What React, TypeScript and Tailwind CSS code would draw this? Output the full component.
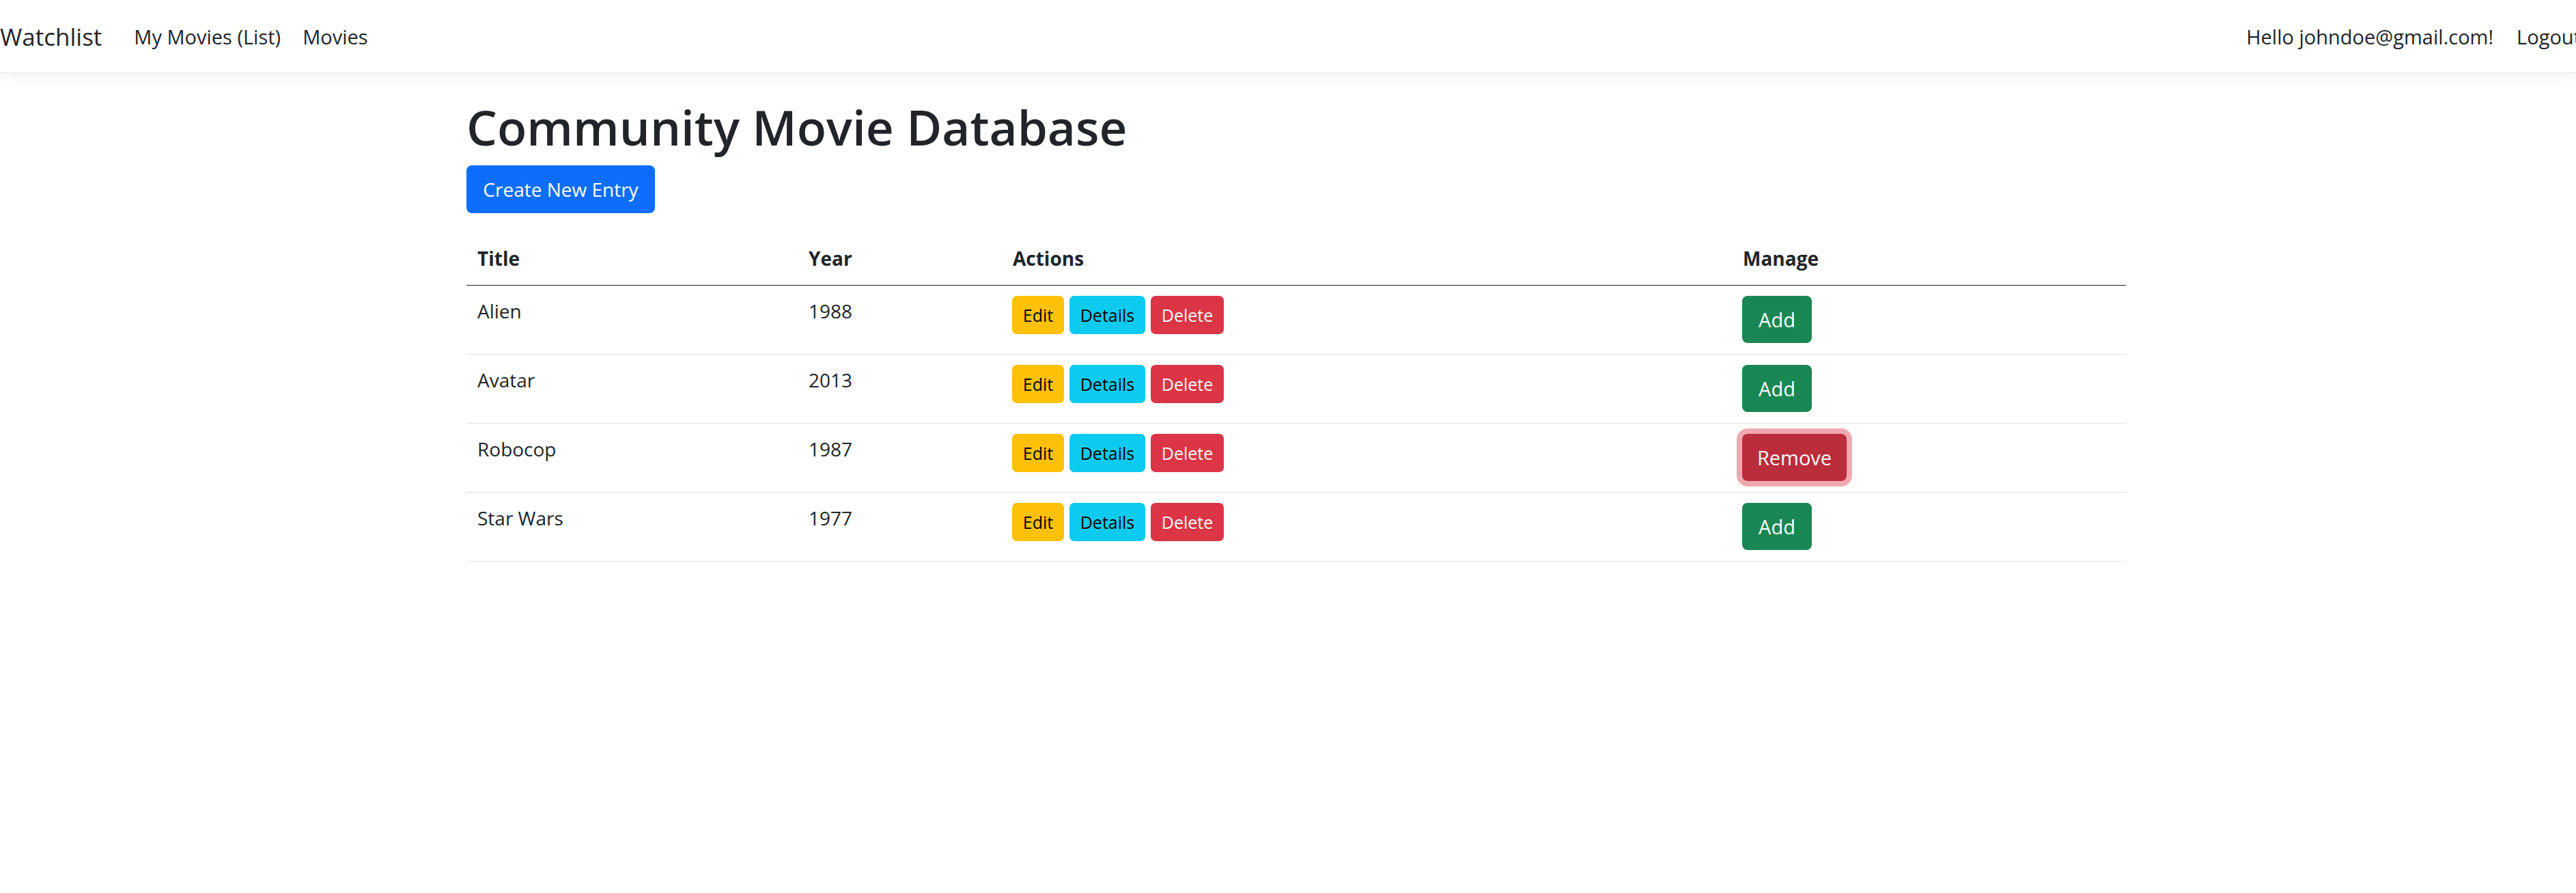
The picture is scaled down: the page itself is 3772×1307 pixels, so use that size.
import React from "react";

type Movie = { title: string; year: number; inList: boolean };

const movies: Movie[] = [
  { title: "Alien", year: 1988, inList: false },
  { title: "Avatar", year: 2013, inList: false },
  { title: "Robocop", year: 1987, inList: true },
  { title: "Star Wars", year: 1977, inList: false },
];

const font = { fontFamily: '"Open Sans", "Noto Sans", sans-serif' };

function Navbar() {
  return (
    <nav className="flex h-[107px] items-center overflow-hidden border-b border-[#e5e5e5] bg-white shadow-[0_7px_22px_rgba(0,0,0,0.05)]">
      <span className="text-[35px] leading-none text-[#212529]">Watchlist</span>
      <div className="ml-[47px] flex items-center gap-[32px] text-[29px] leading-none text-[#212529]">
        <a>My Movies (List)</a>
        <a>Movies</a>
      </div>
      <div className="ml-auto mr-[-7px] flex items-center gap-[34px] text-[29px] leading-none text-[#212529]">
        <span>Hello johndoe@gmail.com!</span>
        <a>Logout</a>
      </div>
    </nav>
  );
}

function SmallBtn({ label, className }: { label: string; className: string }) {
  return (
    <button
      type="button"
      className={`flex h-[56px] items-center justify-center rounded-[7px] text-[25px] leading-none ${className}`}
    >
      {label}
    </button>
  );
}

function Row({ movie }: { movie: Movie }) {
  return (
    <div className="flex border-b border-[#dee2e6] pt-[15px] pb-[16px] text-[28px] leading-[45px] text-[#212529]">
      <div className="w-[485px] px-[16px]">{movie.title}</div>
      <div className="w-[299px] px-[16px]">{movie.year}</div>
      <div className="flex w-[1069px] items-start gap-[8px] pl-[15px]">
        <SmallBtn label="Edit" className="w-[76px] bg-[#ffc107] text-black" />
        <SmallBtn label="Details" className="w-[111px] bg-[#0dcaf0] text-black" />
        <SmallBtn label="Delete" className="w-[107px] bg-[#dc3545] text-white" />
      </div>
      <div className="w-[577px] pl-[15px]">
        {movie.inList ? (
          <button
            type="button"
            className="flex h-[69px] w-[153px] items-center justify-center rounded-[8px] bg-[#bb2d3b] text-[29px] leading-none text-white shadow-[0_0_0_8px_rgba(225,83,97,0.5)]"
          >
            Remove
          </button>
        ) : (
          <button
            type="button"
            className="flex h-[69px] w-[102px] items-center justify-center rounded-[8px] bg-[#198754] text-[29px] leading-none text-white"
          >
            Add
          </button>
        )}
      </div>
    </div>
  );
}

export default function App() {
  return (
    <div className="min-h-[1307px] w-[3772px] bg-white" style={font}>
      <Navbar />
      <main className="ml-[683px] w-[2430px] pt-[36px]">
        <h1 className="mb-[13px] text-[71px] font-semibold leading-[86px] text-[#212529]">
          Community Movie Database
        </h1>
        <button
          type="button"
          className="flex h-[70px] w-[276px] items-center justify-center rounded-[8px] bg-[#0d6efd] text-[28px] leading-none text-white"
        >
          Create New Entry
        </button>

        <div className="mt-[28px]">
          <div className="flex border-b border-[#212529] pt-[16px] pb-[16px] text-[28px] font-bold leading-[45px] text-[#212529]">
            <div className="w-[485px] px-[16px]">Title</div>
            <div className="w-[299px] px-[16px]">Year</div>
            <div className="w-[1069px] px-[16px]">Actions</div>
            <div className="w-[577px] px-[16px]">Manage</div>
          </div>
          {movies.map((m) => (
            <Row key={m.title} movie={m} />
          ))}
        </div>
      </main>
    </div>
  );
}
